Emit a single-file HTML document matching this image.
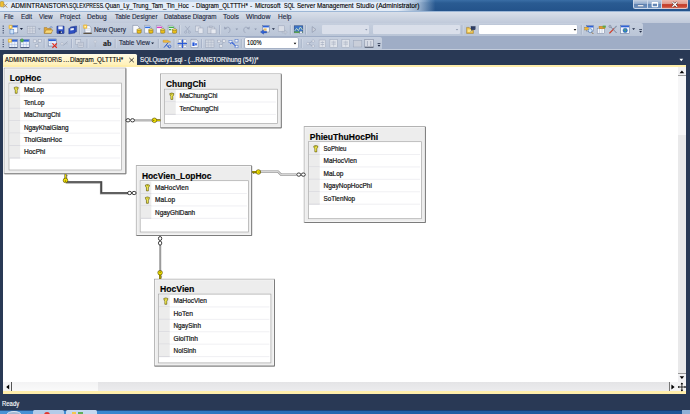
<!DOCTYPE html>
<html><head><meta charset="utf-8"><title>SSMS Diagram</title><style>html,body{margin:0;padding:0}body{width:690px;height:414px;overflow:hidden;position:relative;background:#293955;font-family:"Liberation Sans", sans-serif}
.t{position:absolute;white-space:pre;-webkit-text-stroke:0.12px;line-height:10px;height:10px;z-index:3;transform-origin:0 0}
svg{position:absolute;left:0;top:0}svg text{font-family:"Liberation Sans", sans-serif}</style></head>
<body>
<div style="position:absolute;left:0px;top:0px;width:690px;height:11.5px;background:linear-gradient(#3a6ea6 0,#2a5b92 25%,#23528a 100%);"></div>
<div style="position:absolute;left:-30px;top:0px;width:470px;height:11.5px;background:linear-gradient(to right,rgba(228,237,248,1) 0,rgba(228,237,248,1) 91%,rgba(228,237,248,0.6) 95.5%,rgba(228,237,248,0) 99%);"></div>
<div style="position:absolute;left:-30px;top:0px;width:470px;height:1.5px;background:linear-gradient(to right,rgba(185,208,234,.8) 0,rgba(185,208,234,.8) 90%,rgba(185,208,234,0) 98%);"></div>
<div style="position:absolute;left:0px;top:11px;width:690px;height:1px;background:#9db7d6;"></div>
<div style="position:absolute;left:633px;top:0px;width:15px;height:9.2px;background:linear-gradient(#c4d2e4,#93accd 45%,#5f83b3 52%,#6f92bf);border:0.6px solid #c9d6e8;border-top:none;border-radius:0 0 0 2.5px;box-sizing:border-box;"></div>
<div style="position:absolute;left:648px;top:0px;width:14px;height:9.2px;background:linear-gradient(#c4d2e4,#93accd 45%,#5f83b3 52%,#6f92bf);border:0.6px solid #c9d6e8;border-top:none;border-left:none;box-sizing:border-box;"></div>
<div style="position:absolute;left:662px;top:0px;width:26px;height:9.2px;background:linear-gradient(#edbbb0,#e09c8e 45%,#c74532 52%,#c5402c 75%,#d66a54);border:0.6px solid #e3c4c4;border-top:none;border-left:none;border-radius:0 0 2.5px 0;box-sizing:border-box;"></div>
<div style="position:absolute;left:0px;top:12px;width:690px;height:10.5px;background:linear-gradient(#d9dfe9,#ccd4e1 50%,#c0c9da);"></div>
<div style="position:absolute;left:0px;top:22.5px;width:690px;height:27.5px;background:#9fadc6;"></div>
<div style="position:absolute;left:0px;top:23px;width:642.5px;height:13px;background:linear-gradient(#c6cfde,#bac5d7);border-radius:0 2px 2px 0;"></div>
<div style="position:absolute;left:0px;top:37px;width:382px;height:12.6px;background:linear-gradient(#c6cfde,#bac5d7);border-radius:0 2px 2px 0;"></div>
<div style="position:absolute;left:0px;top:49.3px;width:690px;height:0.7px;background:#c3ccdb;"></div>
<div style="position:absolute;left:0px;top:50px;width:690px;height:364px;background:#293955;"></div>
<div style="position:absolute;left:3.2px;top:53.6px;width:134px;height:12px;background:linear-gradient(#fffbe6,#fff0b4);border-radius:1.5px 1.5px 0 0;"></div>
<div style="position:absolute;left:3.2px;top:65px;width:682.8px;height:2.4px;background:#ffeeab;"></div>
<div style="position:absolute;left:3.2px;top:67.3px;width:682.8px;height:324.2px;background:#fff;"></div>
<div style="position:absolute;left:677.8px;top:67.3px;width:8.2px;height:314.7px;background:#e9e9ea;"></div>
<div style="position:absolute;left:677.8px;top:76px;width:8.2px;height:59px;background:#f6f6f7;"></div>
<div style="position:absolute;left:677.8px;top:67.3px;width:8.2px;height:9px;background:#f1f1f3;border-bottom:0.6px solid #9a9a9a;box-sizing:border-box;"></div>
<div style="position:absolute;left:677.8px;top:373px;width:8.2px;height:9px;background:#f1f1f3;border-top:0.6px solid #9a9a9a;box-sizing:border-box;"></div>
<div style="position:absolute;left:3.2px;top:382.3px;width:674.6px;height:9.2px;background:linear-gradient(#e4e4e6,#ececee);"></div>
<div style="position:absolute;left:12.2px;top:382.3px;width:86px;height:9.2px;background:linear-gradient(#f3f3f4,#fafafa);"></div>
<div style="position:absolute;left:3.2px;top:382.3px;width:8.7px;height:9.2px;background:#f3f3f4;border-right:0.8px solid #555;box-sizing:border-box;"></div>
<div style="position:absolute;left:668.5px;top:382.3px;width:9.3px;height:9.2px;background:#f3f3f4;border-left:0.8px solid #777;box-sizing:border-box;"></div>
<div style="position:absolute;left:677.8px;top:382.3px;width:8.2px;height:9.2px;background:#f4f4f4;"></div>
<div style="position:absolute;left:3.2px;top:391.4px;width:682.8px;height:2.4px;background:#ffeeab;"></div>
<div style="position:absolute;left:0px;top:409.6px;width:690px;height:4.4px;background:linear-gradient(to right,#4a93d6 0,#3a88d0 15%,#2a72bd 35%,#1f5fa6 60%,#1b5496 100%);"></div>
<div style="position:absolute;left:0px;top:409.6px;width:690px;height:0.8px;background:rgba(20,40,80,.55);"></div>
<div style="position:absolute;left:32.5px;top:410.2px;width:31px;height:4px;background:#b4cbe8;border-radius:1.5px 1.5px 0 0;"></div>
<div style="position:absolute;left:65.5px;top:410.2px;width:31.5px;height:4px;background:#c5d8ef;border-radius:1.5px 1.5px 0 0;"></div>
<div style="position:absolute;left:44px;top:411.6px;width:6px;height:3px;background:#e2352b;border-radius:3px 3px 0 0;"></div>
<div style="position:absolute;left:72px;top:411.8px;width:4px;height:3px;background:#f3c64e;"></div>
<div style="position:absolute;left:77.5px;top:411.8px;width:5px;height:3px;background:#5fae5a;"></div>
<div style="position:absolute;left:7px;top:411px;width:14px;height:6px;background:#9fb7d3;border-radius:50%;border:0.6px solid #dfe8f3;box-sizing:border-box;"></div>
<div style="position:absolute;left:682px;top:410.2px;width:8px;height:4px;background:#8fb0d6;"></div>
<div id="ttl0" class="t" style="left:11.2px;top:0.69px;font-size:6.7px;font-weight:normal;color:#000;transform:scaleX(0.9430);">ADMINTRANSTOR</div>
<div id="ttl1" class="t" style="left:66.3px;top:0.69px;font-size:6.7px;font-weight:normal;color:#000;transform:scaleX(1.2908);">\</div>
<div id="ttl2" class="t" style="left:69.0px;top:0.69px;font-size:6.7px;font-weight:normal;color:#000;transform:scaleX(0.7578);">SQLEXPRESS.</div>
<div id="ttl3" class="t" style="left:105.1px;top:0.69px;font-size:6.7px;font-weight:normal;color:#000;transform:scaleX(0.9053);">Quan_Ly_Trung_Tam_Tin_Hoc</div>
<div id="ttl4" class="t" style="left:191.5px;top:0.69px;font-size:6.7px;font-weight:normal;color:#000;transform:scaleX(0.9846);">-</div>
<div id="ttl5" class="t" style="left:196px;top:0.69px;font-size:6.7px;font-weight:normal;color:#000;transform:scaleX(0.9070);">Diagram_QLTTTH*</div>
<div id="ttl6" class="t" style="left:250.4px;top:0.69px;font-size:6.7px;font-weight:normal;color:#000;transform:scaleX(0.9846);">-</div>
<div id="ttl7" class="t" style="left:255.4px;top:0.69px;font-size:6.7px;font-weight:normal;color:#000;transform:scaleX(0.9359);">Microsoft</div>
<div id="ttl8" class="t" style="left:283.5px;top:0.69px;font-size:6.7px;font-weight:normal;color:#000;transform:scaleX(0.8140);">SQL</div>
<div id="ttl9" class="t" style="left:297px;top:0.69px;font-size:6.7px;font-weight:normal;color:#000;transform:scaleX(0.9237);">Server</div>
<div id="ttl10" class="t" style="left:317px;top:0.69px;font-size:6.7px;font-weight:normal;color:#000;transform:scaleX(0.9373);">Management</div>
<div id="ttl11" class="t" style="left:355.8px;top:0.69px;font-size:6.7px;font-weight:normal;color:#000;transform:scaleX(0.9595);">Studio</div>
<div id="ttl12" class="t" style="left:376.4px;top:0.69px;font-size:6.7px;font-weight:normal;color:#000;transform:scaleX(0.9895);">(Administrator)</div>
<div id="m0" class="t" style="left:4px;top:12.19px;font-size:6.7px;font-weight:normal;color:#1b2640;transform:scaleX(0.8904);">File</div>
<div id="m1" class="t" style="left:21px;top:12.19px;font-size:6.7px;font-weight:normal;color:#1b2640;transform:scaleX(0.9539);">Edit</div>
<div id="m2" class="t" style="left:39.3px;top:12.19px;font-size:6.7px;font-weight:normal;color:#1b2640;transform:scaleX(0.9530);">View</div>
<div id="m3" class="t" style="left:60px;top:12.19px;font-size:6.7px;font-weight:normal;color:#1b2640;transform:scaleX(0.9698);">Project</div>
<div id="m4" class="t" style="left:87.4px;top:12.19px;font-size:6.7px;font-weight:normal;color:#1b2640;transform:scaleX(0.9940);">Debug</div>
<div id="m5" class="t" style="left:114.5px;top:12.19px;font-size:6.7px;font-weight:normal;color:#1b2640;transform:scaleX(0.9527);">Table Designer</div>
<div id="m6" class="t" style="left:164px;top:12.19px;font-size:6.7px;font-weight:normal;color:#1b2640;transform:scaleX(0.9432);">Database Diagram</div>
<div id="m7" class="t" style="left:223px;top:12.19px;font-size:6.7px;font-weight:normal;color:#1b2640;transform:scaleX(1.0240);">Tools</div>
<div id="m8" class="t" style="left:246px;top:12.19px;font-size:6.7px;font-weight:normal;color:#1b2640;transform:scaleX(1.0253);">Window</div>
<div id="m9" class="t" style="left:277.5px;top:12.19px;font-size:6.7px;font-weight:normal;color:#1b2640;transform:scaleX(0.9807);">Help</div>
<div id="nq" class="t" style="left:94px;top:24.59px;font-size:6.7px;font-weight:normal;color:#1b2640;transform:scaleX(0.9566);">New Query</div>
<div id="tv" class="t" style="left:119px;top:37.89px;font-size:6.7px;font-weight:normal;color:#1b2640;transform:scaleX(0.9622);">Table View</div>
<div id="zm" class="t" style="left:246.8px;top:37.89px;font-size:6.7px;font-weight:normal;color:#000;transform:scaleX(0.8475);">100%</div>
<div id="ab" class="t" style="left:102.5px;top:38.56px;font-size:8px;font-weight:bold;color:#222;transform:scaleX(1.0055);font-family:'Liberation Serif',serif;">ab</div>
<div id="tab1a" class="t" style="left:5px;top:55.12px;font-size:6.6px;font-weight:normal;color:#000;transform:scaleX(0.8943);">ADMINTRANSTOR\S</div>
<div id="tab1b" class="t" style="left:62.5px;top:55.12px;font-size:6.6px;font-weight:normal;color:#000;transform:scaleX(1.1636);">...</div>
<div id="tab1c" class="t" style="left:69.5px;top:55.12px;font-size:6.6px;font-weight:normal;color:#000;transform:scaleX(0.9465);">Diagram_QLTTTH*</div>
<div id="tab2" class="t" style="left:140px;top:55.12px;font-size:6.6px;font-weight:normal;color:#fff;transform:scaleX(0.9428);">SQLQuery1.sql - (...RANSTOR\hung (54))*</div>
<div id="rdy" class="t" style="left:2px;top:398.79px;font-size:6.7px;font-weight:normal;color:#fff;transform:scaleX(0.8892);">Ready</div>
<div style="position:absolute;left:321.6px;top:25px;width:47.8px;height:9.2px;background:#dadfea;border-radius:1px;"></div>
<div style="position:absolute;left:373.4px;top:25px;width:86.6px;height:9.2px;background:#dadfea;border-radius:1px;"></div>
<div style="position:absolute;left:478.8px;top:25px;width:98.6px;height:9.3px;background:#fff;border-radius:1px;box-shadow:0 0 0 0.5px #b8c2d4;"></div>
<div style="position:absolute;left:245px;top:38.3px;width:53.3px;height:9.7px;background:#fff;border-radius:1px;box-shadow:0 0 0 0.5px #8f9bb3;"></div>
<svg width="690" height="414" viewBox="0 0 690 414">
<rect x="2.6" y="25.6" width="1.3" height="1.1" fill="#414e6c" rx="0" opacity="1"/>
<rect x="2.6" y="27.85" width="1.3" height="1.1" fill="#414e6c" rx="0" opacity="1"/>
<rect x="2.6" y="30.1" width="1.3" height="1.1" fill="#414e6c" rx="0" opacity="1"/>
<rect x="2.6" y="32.35" width="1.3" height="1.1" fill="#414e6c" rx="0" opacity="1"/>
<rect x="10.8" y="25.3" width="7" height="7.6" fill="#f4f7fc" stroke="#5d6f94" stroke-width="0.5" rx="0" opacity="1"/>
<rect x="11.100000000000001" y="25.6" width="6.4" height="1.8" fill="#2f62d6" rx="0" opacity="1"/>
<rect x="8.875" y="25.175" width="3.4499999999999997" height="3.4499999999999997" fill="#f7c948" stroke="#d89b1c" stroke-width="0.3" rx="0.4" opacity="1"/>
<rect x="9.91" y="26.21" width="1.38" height="1.38" fill="#fff6c8" rx="0" opacity="1"/>
<rect x="10" y="29.3" width="3.8" height="4.6" fill="#cfe3f8" stroke="#4a76b8" stroke-width="0.5" rx="0" opacity="1"/>
<path d="M19.799999999999997,28.1 L23.0,28.1 L21.4,30.1 Z" fill="#1b2640" />
<rect x="27.2" y="26.2" width="8" height="7.2" fill="#d3d8e2" stroke="#9aa4b8" stroke-width="0.5" rx="0" opacity="1"/>
<line x1="27.2" y1="28.599999999999998" x2="35.2" y2="28.599999999999998" stroke="#a9b2c4" stroke-width="0.5" opacity="1"/>
<line x1="27.2" y1="31.0" x2="35.2" y2="31.0" stroke="#a9b2c4" stroke-width="0.5" opacity="1"/>
<line x1="29.866666666666667" y1="26.2" x2="29.866666666666667" y2="33.4" stroke="#a9b2c4" stroke-width="0.5" opacity="1"/>
<line x1="32.53333333333333" y1="26.2" x2="32.53333333333333" y2="33.4" stroke="#a9b2c4" stroke-width="0.5" opacity="1"/>
<path d="M37.9,28.200000000000003 L40.699999999999996,28.200000000000003 L39.3,30.0 Z" fill="#8c97ad" />
<path d="M44.2,33.3 L44.2,27.6 L46.8,27.6 L47.6,28.5 L51.2,28.5 L51.2,33.3 Z" fill="#e0a83a" stroke="#94691a" stroke-width="0.45" />
<path d="M44.3,33.3 L46,30 L52.9,30 L51.2,33.3 Z" fill="#f9d978" stroke="#94691a" stroke-width="0.45" />
<path d="M49.5,27.6 q1.6,-1.6 3,-0.2" fill="none" stroke="#3c63b0" stroke-width="0.6" />
<rect x="56.9" y="26.1" width="7.2" height="7.4" fill="#2d50c4" stroke="#1a2d78" stroke-width="0.5" rx="0.5" opacity="1"/>
<rect x="58.3" y="26.3" width="4.4" height="3" fill="#f2f5fb" rx="0" opacity="1"/>
<rect x="58.8" y="31" width="3.4" height="2.5" fill="#16245e" rx="0" opacity="1"/>
<rect x="60.8" y="31.4" width="1" height="1.7" fill="#dfe6f5" rx="0" opacity="1"/>
<path d="M70.4,27 L76.6,26 L76.6,31.8 L70.4,32.8 Z" fill="#3558c8" stroke="#1a2d78" stroke-width="0.45" />
<path d="M68.8,28.4 L75,27.4 L75,33 L68.8,34 Z" fill="#2d50c4" stroke="#1a2d78" stroke-width="0.45" />
<path d="M70.4,28.5 L73.8,27.9 L73.8,30 L70.4,30.6 Z" fill="#eef2fb" />
<line x1="79.7" y1="25" x2="79.7" y2="34.5" stroke="#8e9bb5" stroke-width="0.7" opacity="1"/>
<line x1="80.4" y1="25" x2="80.4" y2="34.5" stroke="#e3e8f0" stroke-width="0.6" opacity="1"/>
<path d="M85,25.6 L89.2,25.6 L91,27.400000000000002 L91,32.800000000000004 L85,32.800000000000004 Z" fill="#f8f9fc" stroke="#6e7c99" stroke-width="0.5" />
<line x1="86.2" y1="28.6" x2="90" y2="28.6" stroke="#b8c2d6" stroke-width="0.5" opacity="1"/>
<line x1="86.2" y1="30.2" x2="90" y2="30.2" stroke="#b8c2d6" stroke-width="0.5" opacity="1"/>
<rect x="83.4" y="24.8" width="3.5999999999999996" height="3.5999999999999996" fill="#f7c948" stroke="#d89b1c" stroke-width="0.3" rx="0.4" opacity="1"/>
<rect x="84.48" y="25.880000000000003" width="1.44" height="1.44" fill="#fff6c8" rx="0" opacity="1"/>
<line x1="83.4" y1="33.3" x2="91.8" y2="33.3" stroke="#4a3a20" stroke-width="1" opacity="1"/>
<path d="M132.8,25.4 L137.4,25.4 L139.20000000000002,27.2 L139.20000000000002,33.199999999999996 L132.8,33.199999999999996 Z" fill="#f8f9fc" stroke="#6e7c99" stroke-width="0.5" />
<rect x="137.0" y="29.400000000000002" width="4.2" height="3.8" fill="#eec21a" stroke="#6b5206" stroke-width="0.45" rx="0.9" opacity="1"/>
<ellipse cx="139.1" cy="29.7" rx="2.1" ry="0.9" fill="#fbe36a" stroke="#6b5206" stroke-width="0.4"/>
<path d="M144.6,25.4 L149.2,25.4 L151.0,27.2 L151.0,33.199999999999996 L144.6,33.199999999999996 Z" fill="#f8f9fc" stroke="#6e7c99" stroke-width="0.5" />
<rect x="145.1" y="26.6" width="5.2" height="1.5" fill="#2f6fe0" rx="0" opacity="1"/>
<rect x="148.79999999999998" y="29.400000000000002" width="4.2" height="3.8" fill="#eec21a" stroke="#6b5206" stroke-width="0.45" rx="0.9" opacity="1"/>
<ellipse cx="150.89999999999998" cy="29.7" rx="2.1" ry="0.9" fill="#fbe36a" stroke="#6b5206" stroke-width="0.4"/>
<path d="M156.4,25.4 L161.0,25.4 L162.8,27.2 L162.8,33.199999999999996 L156.4,33.199999999999996 Z" fill="#f8f9fc" stroke="#6e7c99" stroke-width="0.5" />
<rect x="156.9" y="26.6" width="5.2" height="1.5" fill="#d43fc0" rx="0" opacity="1"/>
<rect x="160.6" y="29.400000000000002" width="4.2" height="3.8" fill="#eec21a" stroke="#6b5206" stroke-width="0.45" rx="0.9" opacity="1"/>
<ellipse cx="162.7" cy="29.7" rx="2.1" ry="0.9" fill="#fbe36a" stroke="#6b5206" stroke-width="0.4"/>
<path d="M168.2,25.4 L172.79999999999998,25.4 L174.6,27.2 L174.6,33.199999999999996 L168.2,33.199999999999996 Z" fill="#f8f9fc" stroke="#6e7c99" stroke-width="0.5" />
<rect x="168.7" y="26.6" width="5.2" height="1.5" fill="#3fae49" rx="0" opacity="1"/>
<rect x="169.0" y="29" width="2" height="1.3" fill="#3fae49" rx="0" opacity="1"/>
<rect x="171.39999999999998" y="29" width="2" height="1.3" fill="#9ad29f" rx="0" opacity="1"/>
<rect x="172.39999999999998" y="29.400000000000002" width="4.2" height="3.8" fill="#eec21a" stroke="#6b5206" stroke-width="0.45" rx="0.9" opacity="1"/>
<ellipse cx="174.49999999999997" cy="29.7" rx="2.1" ry="0.9" fill="#fbe36a" stroke="#6b5206" stroke-width="0.4"/>
<line x1="179.8" y1="25" x2="179.8" y2="34.5" stroke="#8e9bb5" stroke-width="0.7" opacity="1"/>
<line x1="180.5" y1="25" x2="180.5" y2="34.5" stroke="#e3e8f0" stroke-width="0.6" opacity="1"/>
<line x1="185.2" y1="26.2" x2="189.2" y2="31" stroke="#98a2b8" stroke-width="0.7" opacity="1"/>
<line x1="189.8" y1="26.2" x2="185.8" y2="31" stroke="#98a2b8" stroke-width="0.7" opacity="1"/>
<circle cx="185.6" cy="32.2" r="1.1" fill="none" stroke="#98a2b8" stroke-width="0.6"/>
<circle cx="189.4" cy="32.2" r="1.1" fill="none" stroke="#98a2b8" stroke-width="0.6"/>
<rect x="195.4" y="26" width="4.6" height="5.4" fill="#dde1ea" stroke="#9aa4b8" stroke-width="0.5" rx="0" opacity="1"/>
<rect x="198.2" y="28" width="4.8" height="5.6" fill="#e3e6ee" stroke="#9aa4b8" stroke-width="0.5" rx="0" opacity="1"/>
<rect x="207.4" y="27" width="7" height="6.6" fill="#cfd4df" stroke="#9aa4b8" stroke-width="0.5" rx="0" opacity="1"/>
<rect x="209.4" y="26" width="3" height="1.6" fill="#bfc6d4" stroke="#9aa4b8" stroke-width="0.4" rx="0" opacity="1"/>
<rect x="211" y="29" width="5" height="4.8" fill="#e6e9f0" stroke="#9aa4b8" stroke-width="0.5" rx="0" opacity="1"/>
<line x1="219.8" y1="25" x2="219.8" y2="34.5" stroke="#8e9bb5" stroke-width="0.7" opacity="1"/>
<line x1="220.5" y1="25" x2="220.5" y2="34.5" stroke="#e3e8f0" stroke-width="0.6" opacity="1"/>
<path d="M225,28.6 q3.4,-3.2 5,0.4 q0.6,2.4 -1.6,4" fill="none" stroke="#98a2b8" stroke-width="0.8" />
<path d="M224,26.6 L224.4,29.6 L227.2,28.8 Z" fill="#98a2b8" />
<path d="M235.5,28.45 L238.10000000000002,28.45 L236.8,30.150000000000002 Z" fill="#8c97ad" />
<path d="M248.8,28.6 q-3.4,-3.2 -5,0.4 q-0.6,2.4 1.6,4" fill="none" stroke="#98a2b8" stroke-width="0.8" />
<path d="M249.8,26.6 L249.4,29.6 L246.6,28.8 Z" fill="#98a2b8" />
<path d="M254.29999999999998,28.45 L256.9,28.45 L255.6,30.150000000000002 Z" fill="#8c97ad" />
<rect x="262.6" y="25.4" width="6.6" height="6.6" fill="#f4f7fc" stroke="#5d6f94" stroke-width="0.5" rx="0" opacity="1"/>
<rect x="262.9" y="25.7" width="6" height="1.7" fill="#2f62d6" rx="0" opacity="1"/>
<rect x="263.6" y="28.4" width="3" height="2.2" fill="#f0c060" rx="0" opacity="1"/>
<path d="M260.4,32 L263.6,29.8 L263.6,31.2 L266.6,31.2 L266.6,32.9 L263.6,32.9 L263.6,34.2 Z" fill="#2f62d6" stroke="#17347e" stroke-width="0.3" />
<path d="M271.9,28.150000000000002 L274.9,28.150000000000002 L273.4,30.05 Z" fill="#1b2640" />
<rect x="278.2" y="25.8" width="6.2" height="5.6" fill="#d9dde6" stroke="#9aa4b8" stroke-width="0.5" rx="0" opacity="1"/>
<path d="M282,31.4 L285,31.4 L285,30 L287.4,32.2 L285,34.4 L285,33 L282,33 Z" fill="#c2c8d5" stroke="#98a2b8" stroke-width="0.3" />
<line x1="290.4" y1="25" x2="290.4" y2="34.5" stroke="#8e9bb5" stroke-width="0.7" opacity="1"/>
<line x1="291.09999999999997" y1="25" x2="291.09999999999997" y2="34.5" stroke="#e3e8f0" stroke-width="0.6" opacity="1"/>
<rect x="294.2" y="25.8" width="8.6" height="7" fill="#3c74c8" stroke="#27406e" stroke-width="0.5" rx="0" opacity="1"/>
<path d="M294.6,31 L296.6,28.4 L298.4,30.6 L300.4,27 L302.4,30" fill="none" stroke="#d8f0c0" stroke-width="0.8" />
<rect x="294.2" y="31.4" width="8.6" height="1.6" fill="#5aa050" rx="0" opacity="1"/>
<rect x="299.8" y="31.2" width="2.4" height="2.6" fill="#e8ecf4" stroke="#47598a" stroke-width="0.3" rx="0" opacity="1"/>
<line x1="305.7" y1="25" x2="305.7" y2="34.5" stroke="#8e9bb5" stroke-width="0.7" opacity="1"/>
<line x1="306.4" y1="25" x2="306.4" y2="34.5" stroke="#e3e8f0" stroke-width="0.6" opacity="1"/>
<path d="M312.2,26.6 L316,29.5 L312.2,32.4 Z" fill="#c9cfdb" stroke="#8a94aa" stroke-width="0.6" />
<path d="M365.1,29.05 L367.5,29.05 L366.3,30.55 Z" fill="#8c97ad" />
<path d="M455.8,29.05 L458.2,29.05 L457,30.55 Z" fill="#8c97ad" />
<line x1="462.2" y1="25" x2="462.2" y2="34.5" stroke="#8e9bb5" stroke-width="0.7" opacity="1"/>
<line x1="462.9" y1="25" x2="462.9" y2="34.5" stroke="#e3e8f0" stroke-width="0.6" opacity="1"/>
<path d="M466.6,33.4 L466.6,27.4 L469.2,27.4 L470,28.4 L473.4,28.4 L473.4,33.4 Z" fill="#ecc04a" stroke="#8f6a18" stroke-width="0.45" />
<rect x="467.6" y="29.4" width="4.2" height="2.6" fill="#fbe58e" rx="0" opacity="1"/>
<rect x="471" y="26.4" width="4.2" height="3.4" fill="#2c3c66" stroke="#1b2640" stroke-width="0.3" rx="0" opacity="1"/>
<line x1="470.6" y1="31.4" x2="474.6" y2="28.4" stroke="#3b4a70" stroke-width="0.7" opacity="1"/>
<path d="M573.7,28.95 L576.3,28.95 L575,30.650000000000002 Z" fill="#000" />
<line x1="581.4" y1="25" x2="581.4" y2="34.5" stroke="#8e9bb5" stroke-width="0.7" opacity="1"/>
<line x1="582.1" y1="25" x2="582.1" y2="34.5" stroke="#e3e8f0" stroke-width="0.6" opacity="1"/>
<rect x="586.6" y="25.4" width="7" height="5.6" fill="#f4f7fc" stroke="#5d6f94" stroke-width="0.5" rx="0" opacity="1"/>
<rect x="586.9" y="25.7" width="6.4" height="1.8" fill="#2f62d6" rx="0" opacity="1"/>
<rect x="584.8" y="27.2" width="3.6" height="2.8" fill="#f0b83a" stroke="#9a6a12" stroke-width="0.3" rx="0" opacity="1"/>
<circle cx="590.2" cy="30.6" r="2" fill="#cfe6fb" stroke="#3f6db2" stroke-width="0.6"/>
<line x1="591.6" y1="32.2" x2="593.4" y2="34" stroke="#8a6a3a" stroke-width="0.9" opacity="1"/>
<rect x="597.2" y="28.2" width="7.4" height="5.4" fill="#f4f6fa" stroke="#6e7c99" stroke-width="0.5" rx="0" opacity="1"/>
<rect x="599" y="26.2" width="6" height="2.6" fill="#e39a2e" stroke="#9a6a12" stroke-width="0.3" rx="0" opacity="1"/>
<rect x="602.6" y="25.6" width="3.2" height="2" fill="#58a84c" rx="0" opacity="1"/>
<line x1="599.6" y1="29" x2="599.6" y2="33.4" stroke="#9fb0cf" stroke-width="0.5" opacity="1"/>
<line x1="602" y1="29" x2="602" y2="33.4" stroke="#9fb0cf" stroke-width="0.5" opacity="1"/>
<line x1="609.4" y1="33.4" x2="614.2" y2="28.4" stroke="#d03a24" stroke-width="1.3" opacity="1"/>
<line x1="614" y1="28.6" x2="616.6" y2="26" stroke="#8b95aa" stroke-width="1.1" opacity="1"/>
<line x1="610.2" y1="26.4" x2="616.6" y2="33" stroke="#7d879c" stroke-width="1.0" opacity="1"/>
<circle cx="610" cy="26.4" r="1.2" fill="#aab3c4" stroke="#6f7990" stroke-width="0.4"/>
<rect x="620.6" y="25.2" width="8.8" height="8.2" fill="#f4f7fc" stroke="#5d6f94" stroke-width="0.5" rx="0" opacity="1"/>
<rect x="620.9" y="25.5" width="8.200000000000001" height="1.8" fill="#2f62d6" rx="0" opacity="1"/>
<circle cx="625.2" cy="30.4" r="2.2" fill="#2e7bd0" stroke="#1d4c8a" stroke-width="0.4"/>
<path d="M624,29.6 q1.2,-1 2,0.2 q0.2,1.4 -1,1.6 z" fill="#58b04e" />
<path d="M632.1,28.150000000000002 L635.1,28.150000000000002 L633.6,30.05 Z" fill="#1b2640" />
<line x1="639.2" y1="29.6" x2="642" y2="29.6" stroke="#1b2640" stroke-width="0.8" opacity="1"/>
<path d="M639.2,30.900000000000002 L642.0,30.900000000000002 L640.6,32.7 Z" fill="#1b2640" />
<rect x="2.6" y="39.4" width="1.3" height="1.1" fill="#414e6c" rx="0" opacity="1"/>
<rect x="2.6" y="41.65" width="1.3" height="1.1" fill="#414e6c" rx="0" opacity="1"/>
<rect x="2.6" y="43.9" width="1.3" height="1.1" fill="#414e6c" rx="0" opacity="1"/>
<rect x="2.6" y="46.15" width="1.3" height="1.1" fill="#414e6c" rx="0" opacity="1"/>
<rect x="9" y="39.4" width="8.6" height="8.2" fill="#eef3fb" stroke="#51648c" stroke-width="0.5" rx="0" opacity="1"/>
<rect x="9.3" y="39.699999999999996" width="8.0" height="2.0" fill="#2f62d6" rx="0" opacity="1"/>
<line x1="11.866666666666667" y1="41.6" x2="11.866666666666667" y2="47.599999999999994" stroke="#9fb4dc" stroke-width="0.5" opacity="1"/>
<line x1="14.733333333333334" y1="41.6" x2="14.733333333333334" y2="47.599999999999994" stroke="#9fb4dc" stroke-width="0.5" opacity="1"/>
<line x1="9" y1="44.6" x2="17.6" y2="44.6" stroke="#9fb4dc" stroke-width="0.5" opacity="1"/>
<line x1="9" y1="47.599999999999994" x2="17.6" y2="47.599999999999994" stroke="#33456b" stroke-width="0.8" opacity="1"/>
<rect x="8.275" y="38.875" width="3.4499999999999997" height="3.4499999999999997" fill="#f7c948" stroke="#d89b1c" stroke-width="0.3" rx="0.4" opacity="1"/>
<rect x="9.31" y="39.910000000000004" width="1.38" height="1.38" fill="#fff6c8" rx="0" opacity="1"/>
<rect x="20.6" y="39.4" width="8.6" height="8.2" fill="#eef3fb" stroke="#51648c" stroke-width="0.5" rx="0" opacity="1"/>
<rect x="20.900000000000002" y="39.699999999999996" width="8.0" height="2.0" fill="#2f62d6" rx="0" opacity="1"/>
<line x1="23.46666666666667" y1="41.6" x2="23.46666666666667" y2="47.599999999999994" stroke="#9fb4dc" stroke-width="0.5" opacity="1"/>
<line x1="26.333333333333336" y1="41.6" x2="26.333333333333336" y2="47.599999999999994" stroke="#9fb4dc" stroke-width="0.5" opacity="1"/>
<line x1="20.6" y1="44.6" x2="29.200000000000003" y2="44.6" stroke="#9fb4dc" stroke-width="0.5" opacity="1"/>
<line x1="20.6" y1="47.599999999999994" x2="29.200000000000003" y2="47.599999999999994" stroke="#33456b" stroke-width="0.8" opacity="1"/>
<path d="M22,38.4 L24,40.4 L22,42.4 L20,40.4 Z" fill="#4fae48" stroke="#2c7a2a" stroke-width="0.3" />
<rect x="33.2" y="39.9" width="3" height="2.6" fill="#e3e6ed" stroke="#9aa4b8" stroke-width="0.5" rx="0" opacity="1"/>
<rect x="38.2" y="39.6" width="3" height="2.6" fill="#e3e6ed" stroke="#9aa4b8" stroke-width="0.5" rx="0" opacity="1"/>
<rect x="35.2" y="44.4" width="3" height="2.6" fill="#e3e6ed" stroke="#9aa4b8" stroke-width="0.5" rx="0" opacity="1"/>
<line x1="36.2" y1="41.199999999999996" x2="38.2" y2="40.9" stroke="#9aa4b8" stroke-width="0.5" opacity="1"/>
<line x1="36.7" y1="44.4" x2="39.5" y2="42.199999999999996" stroke="#9aa4b8" stroke-width="0.5" opacity="1"/>
<line x1="44.3" y1="39" x2="44.3" y2="48" stroke="#8e9bb5" stroke-width="0.7" opacity="1"/>
<line x1="45.0" y1="39" x2="45.0" y2="48" stroke="#e3e8f0" stroke-width="0.6" opacity="1"/>
<rect x="48.2" y="39.0" width="8" height="7" fill="#f1f5fc" stroke="#51648c" stroke-width="0.5" rx="0" opacity="1"/>
<rect x="48.5" y="39.3" width="7.4" height="1.8" fill="#2f62d6" rx="0" opacity="1"/>
<line x1="51" y1="41.199999999999996" x2="51" y2="46.0" stroke="#9fb4dc" stroke-width="0.5" opacity="1"/>
<line x1="48.2" y1="43.4" x2="56.2" y2="43.4" stroke="#9fb4dc" stroke-width="0.5" opacity="1"/>
<line x1="52.4" y1="43.4" x2="56.8" y2="47.8" stroke="#e02818" stroke-width="1.2" opacity="1"/>
<line x1="56.8" y1="43.4" x2="52.4" y2="47.8" stroke="#e02818" stroke-width="1.2" opacity="1"/>
<circle cx="62" cy="43.8" r="1.3" fill="#dfe3ea" stroke="#9aa4b8" stroke-width="0.5"/>
<line x1="63.4" y1="45.4" x2="67.6" y2="41.6" stroke="#9aa4b8" stroke-width="0.8" opacity="1"/>
<line x1="64.8" y1="43.8" x2="68" y2="43.8" stroke="#a9b2c4" stroke-width="0.5" opacity="1"/>
<line x1="71.6" y1="39" x2="71.6" y2="48" stroke="#8e9bb5" stroke-width="0.7" opacity="1"/>
<line x1="72.3" y1="39" x2="72.3" y2="48" stroke="#e3e8f0" stroke-width="0.6" opacity="1"/>
<rect x="75.4" y="39.6" width="5.4" height="5" fill="#d6dbe5" stroke="#9aa4b8" stroke-width="0.5" rx="0" opacity="1"/>
<rect x="78" y="42.2" width="5.6" height="5.4" fill="#cfd4df" stroke="#9aa4b8" stroke-width="0.5" rx="0" opacity="1"/>
<line x1="79" y1="44" x2="82.6" y2="44" stroke="#9aa4b8" stroke-width="0.5" opacity="1"/>
<line x1="79" y1="45.6" x2="82.6" y2="45.6" stroke="#9aa4b8" stroke-width="0.5" opacity="1"/>
<line x1="87.2" y1="39" x2="87.2" y2="48" stroke="#8e9bb5" stroke-width="0.7" opacity="1"/>
<line x1="87.9" y1="39" x2="87.9" y2="48" stroke="#e3e8f0" stroke-width="0.6" opacity="1"/>
<circle cx="95.2" cy="41.6" r="1.4" fill="#d2d7e1" stroke="#aeb6c6" stroke-width="0.4"/>
<line x1="95.2" y1="43" x2="95.2" y2="47" stroke="#b4bccb" stroke-width="0.9" opacity="1"/>
<line x1="115.3" y1="39" x2="115.3" y2="48" stroke="#8e9bb5" stroke-width="0.7" opacity="1"/>
<line x1="116.0" y1="39" x2="116.0" y2="48" stroke="#e3e8f0" stroke-width="0.6" opacity="1"/>
<path d="M151.1,42.449999999999996 L154.1,42.449999999999996 L152.6,44.35 Z" fill="#1b2640" />
<line x1="158.4" y1="39" x2="158.4" y2="48" stroke="#8e9bb5" stroke-width="0.7" opacity="1"/>
<line x1="159.1" y1="39" x2="159.1" y2="48" stroke="#e3e8f0" stroke-width="0.6" opacity="1"/>
<path d="M163,40.2 L167.4,40.2 L170.8,42 L167.4,42.6 L163,42.2 Z" fill="#f0b83a" stroke="#a87414" stroke-width="0.3" />
<path d="M164,47.6 L168,42.8 M166.4,45 L169.4,47.8" fill="none" stroke="#2858c8" stroke-width="1" />
<circle cx="169.6" cy="46.4" r="1.3" fill="none" stroke="#2858c8" stroke-width="0.7"/>
<line x1="174.2" y1="39" x2="174.2" y2="48" stroke="#8e9bb5" stroke-width="0.7" opacity="1"/>
<line x1="174.89999999999998" y1="39" x2="174.89999999999998" y2="48" stroke="#e3e8f0" stroke-width="0.6" opacity="1"/>
<line x1="177.6" y1="43.6" x2="187" y2="43.6" stroke="#2456d8" stroke-width="1.1" opacity="1"/>
<line x1="182.4" y1="39.4" x2="182.4" y2="48" stroke="#2456d8" stroke-width="1.1" opacity="1"/>
<rect x="183.6" y="39.8" width="3" height="2.4" fill="#f4f6fb" stroke="#8592ad" stroke-width="0.4" rx="0" opacity="1"/>
<rect x="183.6" y="45.2" width="3" height="2.4" fill="#f4f6fb" stroke="#8592ad" stroke-width="0.4" rx="0" opacity="1"/>
<rect x="178.2" y="39.8" width="3" height="2.4" fill="#f4f6fb" stroke="#8592ad" stroke-width="0.4" rx="0" opacity="1"/>
<rect x="178.2" y="45.2" width="3" height="2.4" fill="#f4f6fb" stroke="#8592ad" stroke-width="0.4" rx="0" opacity="1"/>
<path d="M191,39.4 L196.2,39.4 L198,41.199999999999996 L198,47.599999999999994 L191,47.599999999999994 Z" fill="#f8f9fc" stroke="#6e7c99" stroke-width="0.5" />
<rect x="192.4" y="42.4" width="2.2" height="3.6" fill="#2456d8" rx="0" opacity="1"/>
<rect x="195.2" y="43.2" width="1.6" height="2.2" fill="#2456d8" rx="0" opacity="1"/>
<line x1="192.2" y1="41" x2="196.6" y2="41" stroke="#7d8cb0" stroke-width="0.5" opacity="1"/>
<line x1="201.6" y1="39" x2="201.6" y2="48" stroke="#8e9bb5" stroke-width="0.7" opacity="1"/>
<line x1="202.29999999999998" y1="39" x2="202.29999999999998" y2="48" stroke="#e3e8f0" stroke-width="0.6" opacity="1"/>
<rect x="205.4" y="40" width="8.6" height="7.4" fill="#d3d8e2" stroke="#9aa4b8" stroke-width="0.5" rx="0" opacity="1"/>
<line x1="205.4" y1="42.46666666666667" x2="214.0" y2="42.46666666666667" stroke="#a9b2c4" stroke-width="0.5" opacity="1"/>
<line x1="205.4" y1="44.93333333333334" x2="214.0" y2="44.93333333333334" stroke="#a9b2c4" stroke-width="0.5" opacity="1"/>
<line x1="208.26666666666668" y1="40" x2="208.26666666666668" y2="47.4" stroke="#a9b2c4" stroke-width="0.5" opacity="1"/>
<line x1="211.13333333333333" y1="40" x2="211.13333333333333" y2="47.4" stroke="#a9b2c4" stroke-width="0.5" opacity="1"/>
<rect x="217.6" y="40.1" width="3" height="2.6" fill="#e3e6ed" stroke="#9aa4b8" stroke-width="0.5" rx="0" opacity="1"/>
<rect x="222.6" y="39.800000000000004" width="3" height="2.6" fill="#e3e6ed" stroke="#9aa4b8" stroke-width="0.5" rx="0" opacity="1"/>
<rect x="219.6" y="44.6" width="3" height="2.6" fill="#e3e6ed" stroke="#9aa4b8" stroke-width="0.5" rx="0" opacity="1"/>
<line x1="220.6" y1="41.4" x2="222.6" y2="41.1" stroke="#9aa4b8" stroke-width="0.5" opacity="1"/>
<line x1="221.1" y1="44.6" x2="223.9" y2="42.4" stroke="#9aa4b8" stroke-width="0.5" opacity="1"/>
<rect x="235" y="39.6" width="3" height="2.4" fill="#f4f6fb" stroke="#4a72c8" stroke-width="0.5" rx="0" opacity="1"/>
<rect x="235" y="45.4" width="3" height="2.4" fill="#f4f6fb" stroke="#4a72c8" stroke-width="0.5" rx="0" opacity="1"/>
<rect x="229" y="40.4" width="3" height="2.4" fill="#f4f6fb" stroke="#4a72c8" stroke-width="0.5" rx="0" opacity="1"/>
<path d="M230,44 q3,-3 4.6,0.6 M232,43 L236,46.4" fill="none" stroke="#2456d8" stroke-width="0.8" />
<line x1="241.4" y1="39" x2="241.4" y2="48" stroke="#8e9bb5" stroke-width="0.7" opacity="1"/>
<line x1="242.1" y1="39" x2="242.1" y2="48" stroke="#e3e8f0" stroke-width="0.6" opacity="1"/>
<path d="M293.7,42.75 L296.3,42.75 L295,44.45 Z" fill="#000" />
<line x1="301.4" y1="39" x2="301.4" y2="48" stroke="#8e9bb5" stroke-width="0.7" opacity="1"/>
<line x1="302.09999999999997" y1="39" x2="302.09999999999997" y2="48" stroke="#e3e8f0" stroke-width="0.6" opacity="1"/>
<circle cx="307.9" cy="43.6" r="1.3" fill="#e3e6ed" stroke="#96a0b6" stroke-width="0.5"/>
<circle cx="313.2" cy="41.1" r="1.3" fill="#e3e6ed" stroke="#96a0b6" stroke-width="0.5"/>
<circle cx="313.2" cy="46.1" r="1.3" fill="#e3e6ed" stroke="#96a0b6" stroke-width="0.5"/>
<line x1="309.0" y1="43.1" x2="312.0" y2="41.6" stroke="#96a0b6" stroke-width="0.6" opacity="1"/>
<line x1="309.0" y1="44.1" x2="312.0" y2="45.6" stroke="#96a0b6" stroke-width="0.6" opacity="1"/>
<rect x="319.1" y="40" width="6.6" height="7.6" fill="#dfe3ea" stroke="#9aa4b8" stroke-width="0.5" rx="0" opacity="1"/>
<line x1="320.6" y1="42.5" x2="324.20000000000005" y2="42.5" stroke="#9aa4b8" stroke-width="0.6" opacity="1"/>
<line x1="320.6" y1="44.5" x2="324.20000000000005" y2="44.5" stroke="#9aa4b8" stroke-width="0.6" opacity="1"/>
<line x1="322.40000000000003" y1="41" x2="322.40000000000003" y2="46.6" stroke="#aab3c4" stroke-width="0.5" opacity="1"/>
<rect x="329.9" y="39.6" width="7.4" height="8" fill="#dfe3ea" stroke="#9aa4b8" stroke-width="0.5" rx="0" opacity="1"/>
<line x1="331.4" y1="42.1" x2="335.79999999999995" y2="42.1" stroke="#9aa4b8" stroke-width="0.6" opacity="1"/>
<line x1="331.4" y1="44.1" x2="335.79999999999995" y2="44.1" stroke="#9aa4b8" stroke-width="0.6" opacity="1"/>
<line x1="333.59999999999997" y1="40.6" x2="333.59999999999997" y2="46.6" stroke="#aab3c4" stroke-width="0.5" opacity="1"/>
<rect x="341.9" y="39.6" width="7.6" height="8" fill="#dfe3ea" stroke="#9aa4b8" stroke-width="0.5" rx="0" opacity="1"/>
<line x1="343.4" y1="42.1" x2="348.0" y2="42.1" stroke="#9aa4b8" stroke-width="0.6" opacity="1"/>
<line x1="343.4" y1="44.1" x2="348.0" y2="44.1" stroke="#9aa4b8" stroke-width="0.6" opacity="1"/>
<line x1="345.7" y1="40.6" x2="345.7" y2="46.6" stroke="#aab3c4" stroke-width="0.5" opacity="1"/>
<rect x="353.6" y="40.6" width="8.2" height="6.4" fill="#c9ced9" stroke="#9aa4b8" stroke-width="0.5" rx="0" opacity="1"/>
<rect x="364.8" y="39.6" width="8.6" height="8" fill="#d9dde6" stroke="#7a8499" stroke-width="0.5" rx="0" opacity="1"/>
<line x1="364.8" y1="47.2" x2="373.4" y2="47.2" stroke="#4a5468" stroke-width="1" opacity="1"/>
<line x1="367.4" y1="41" x2="367.4" y2="46" stroke="#8a94aa" stroke-width="0.6" opacity="1"/>
<line x1="370.8" y1="41" x2="370.8" y2="46" stroke="#8a94aa" stroke-width="0.6" opacity="1"/>
<line x1="377.6" y1="43.6" x2="380.4" y2="43.6" stroke="#1b2640" stroke-width="0.8" opacity="1"/>
<path d="M377.6,44.9 L380.4,44.9 L379,46.699999999999996 Z" fill="#1b2640" />
<rect x="0.2" y="1.6" width="3.6" height="5.2" fill="#f0c030" stroke="#8a6a10" stroke-width="0.4" rx="1" opacity="1"/>
<line x1="3.4" y1="7.6" x2="7.2" y2="3.6" stroke="#8a93a8" stroke-width="1" opacity="1"/>
<line x1="3.4" y1="3.6" x2="7.2" y2="7.6" stroke="#c08a3a" stroke-width="1" opacity="1"/>
<rect x="637.6" y="5" width="6" height="1.6" fill="#ffffff" stroke="#3a4f74" stroke-width="0.3" rx="0.5" opacity="1"/>
<rect x="652.2" y="2.6" width="5.4" height="4.2" fill="none" stroke="#ffffff" stroke-width="1.1" rx="0.6" opacity="1"/>
<rect x="652.2" y="2.2" width="5.4" height="1.2" fill="#ffffff" rx="0" opacity="1"/>
<path d="M672.4,2.2 L677.2,6.8 M677.2,2.2 L672.4,6.8" fill="none" stroke="#3b1b16" stroke-width="2.2" />
<path d="M672.4,2.2 L677.2,6.8 M677.2,2.2 L672.4,6.8" fill="none" stroke="#ffffff" stroke-width="1.3" />
<path d="M129.4,58 L133.8,62.2 M133.8,58 L129.4,62.2" fill="none" stroke="#2a2a2a" stroke-width="0.9" />
<path d="M679.4,58.85 L683.1999999999999,58.85 L681.3,61.35 Z" fill="#ffffff" />
<path d="M679.6,73.2 L684.2,73.2 L681.9,70.4 Z" fill="#000" />
<path d="M679.6,376.2 L684.2,376.2 L681.9,379 Z" fill="#000" />
<path d="M9.2,384.4 L9.2,389.4 L6.2,386.9 Z" fill="#000" />
<path d="M671.4,384.4 L671.4,389.4 L674.6,386.9 Z" fill="#000" />
<path d="M681.9,383 L681.9,391 M678.2,387 L685.8,387" fill="none" stroke="#000" stroke-width="0.8" />
<path d="M680.6,384.2 L681.9,382.6 L683.2,384.2 Z M680.6,389.8 L681.9,391.4 L683.2,389.8 Z M679.2,385.8 L677.8,387 L679.2,388.2 Z M684.6,385.8 L686,387 L684.6,388.2 Z" fill="#000" />
<rect x="4.2" y="68.1" width="121.6" height="105.6" fill="#ededed" stroke="#a2a2a2" stroke-width="0.8" rx="0" opacity="1"/>
<rect x="5.0" y="68.89999999999999" width="120.0" height="104.0" fill="none" stroke="#f8f8f8" stroke-width="0.6" rx="0" opacity="1"/>
<path d="M125.89999999999999,68.5 L125.89999999999999,173.79999999999998 L4.6000000000000005,173.79999999999998" fill="none" stroke="#7c7c7c" stroke-width="1.0" />
<rect x="9" y="83.1" width="112.6" height="86.9" fill="#ffffff" stroke="#a9a9a9" stroke-width="0.7" rx="0" opacity="1"/>
<rect x="9.5" y="83.8" width="10.6" height="11.92" fill="#ececec" rx="0" opacity="1"/>
<line x1="9.4" y1="95.92" x2="120.1" y2="95.92" stroke="#e9e9ee" stroke-width="0.7" opacity="1"/>
<line x1="9.4" y1="95.92" x2="20.1" y2="95.92" stroke="#cfcfd4" stroke-width="0.7" opacity="1"/>
<text x="23.9" y="92.25" font-size="6.6" font-weight="normal" fill="#1a1a1a" stroke="#1a1a1a" stroke-width="0.22" textLength="20.0" lengthAdjust="spacingAndGlyphs">MaLop</text>
<path d="M14.149999999999999,87.5 Q16.2,86.3 18.25,87.5 L17.9,89.1 L17.15,90.1 L17.15,93.3 L15.25,93.3 L15.25,90.1 L14.5,89.1 Z" fill="#e4da22" stroke="#474100" stroke-width="0.55" stroke-linejoin="round"/>
<path d="M15.2,87.8 L17.2,87.8 L16.5,89.4 L16.5,92.6 L15.899999999999999,92.6 L15.899999999999999,89.4 Z" fill="#f3ee7a" />
<circle cx="16.2" cy="88.1" r="0.45" fill="#474100"/>
<rect x="9.5" y="96.22" width="10.6" height="11.92" fill="#ececec" rx="0" opacity="1"/>
<line x1="9.4" y1="108.34" x2="120.1" y2="108.34" stroke="#e9e9ee" stroke-width="0.7" opacity="1"/>
<line x1="9.4" y1="108.34" x2="20.1" y2="108.34" stroke="#cfcfd4" stroke-width="0.7" opacity="1"/>
<text x="23.9" y="104.67" font-size="6.6" font-weight="normal" fill="#1a1a1a" stroke="#1a1a1a" stroke-width="0.22" textLength="20.6" lengthAdjust="spacingAndGlyphs">TenLop</text>
<rect x="9.5" y="108.64" width="10.6" height="11.92" fill="#ececec" rx="0" opacity="1"/>
<line x1="9.4" y1="120.76" x2="120.1" y2="120.76" stroke="#e9e9ee" stroke-width="0.7" opacity="1"/>
<line x1="9.4" y1="120.76" x2="20.1" y2="120.76" stroke="#cfcfd4" stroke-width="0.7" opacity="1"/>
<text x="23.9" y="117.09" font-size="6.6" font-weight="normal" fill="#1a1a1a" stroke="#1a1a1a" stroke-width="0.22" textLength="36.4" lengthAdjust="spacingAndGlyphs">MaChungChi</text>
<rect x="9.5" y="121.05999999999999" width="10.6" height="11.92" fill="#ececec" rx="0" opacity="1"/>
<line x1="9.4" y1="133.17999999999998" x2="120.1" y2="133.17999999999998" stroke="#e9e9ee" stroke-width="0.7" opacity="1"/>
<line x1="9.4" y1="133.17999999999998" x2="20.1" y2="133.17999999999998" stroke="#cfcfd4" stroke-width="0.7" opacity="1"/>
<text x="23.9" y="129.51" font-size="6.6" font-weight="normal" fill="#1a1a1a" stroke="#1a1a1a" stroke-width="0.22" textLength="44.6" lengthAdjust="spacingAndGlyphs">NgayKhaiGiang</text>
<rect x="9.5" y="133.48000000000002" width="10.6" height="11.92" fill="#ececec" rx="0" opacity="1"/>
<line x1="9.4" y1="145.6" x2="120.1" y2="145.6" stroke="#e9e9ee" stroke-width="0.7" opacity="1"/>
<line x1="9.4" y1="145.6" x2="20.1" y2="145.6" stroke="#cfcfd4" stroke-width="0.7" opacity="1"/>
<text x="23.9" y="141.93" font-size="6.6" font-weight="normal" fill="#1a1a1a" stroke="#1a1a1a" stroke-width="0.22" textLength="38.0" lengthAdjust="spacingAndGlyphs">ThoiGianHoc</text>
<rect x="9.5" y="145.9" width="10.6" height="11.92" fill="#ececec" rx="0" opacity="1"/>
<line x1="9.4" y1="158.01999999999998" x2="120.1" y2="158.01999999999998" stroke="#e9e9ee" stroke-width="0.7" opacity="1"/>
<line x1="9.4" y1="158.01999999999998" x2="20.1" y2="158.01999999999998" stroke="#cfcfd4" stroke-width="0.7" opacity="1"/>
<text x="23.9" y="154.35" font-size="6.6" font-weight="normal" fill="#1a1a1a" stroke="#1a1a1a" stroke-width="0.22" textLength="21.4" lengthAdjust="spacingAndGlyphs">HocPhi</text>
<text x="9.8" y="81.3" font-size="8.6" font-weight="bold" fill="#000" stroke="#000" stroke-width="0.15" textLength="31.4" lengthAdjust="spacingAndGlyphs">LopHoc</text>
<rect x="160.5" y="73.9" width="120.69999999999999" height="53.89999999999999" fill="#ededed" stroke="#a2a2a2" stroke-width="0.8" rx="0" opacity="1"/>
<rect x="161.3" y="74.7" width="119.1" height="52.29999999999999" fill="none" stroke="#f8f8f8" stroke-width="0.6" rx="0" opacity="1"/>
<path d="M281.3,74.30000000000001 L281.3,127.89999999999999 L160.9,127.89999999999999" fill="none" stroke="#7c7c7c" stroke-width="1.0" />
<rect x="164.6" y="89.2" width="112.79999999999998" height="34.39999999999999" fill="#ffffff" stroke="#a9a9a9" stroke-width="0.7" rx="0" opacity="1"/>
<rect x="165.1" y="89.9" width="10.6" height="11.92" fill="#ececec" rx="0" opacity="1"/>
<line x1="165.0" y1="102.02000000000001" x2="275.9" y2="102.02000000000001" stroke="#e9e9ee" stroke-width="0.7" opacity="1"/>
<line x1="165.0" y1="102.02000000000001" x2="175.7" y2="102.02000000000001" stroke="#cfcfd4" stroke-width="0.7" opacity="1"/>
<text x="179.5" y="98.35" font-size="6.6" font-weight="normal" fill="#1a1a1a" stroke="#1a1a1a" stroke-width="0.22" textLength="38.0" lengthAdjust="spacingAndGlyphs">MaChungChi</text>
<path d="M169.74999999999997,93.60000000000001 Q171.79999999999998,92.4 173.85,93.60000000000001 L173.49999999999997,95.2 L172.74999999999997,96.2 L172.74999999999997,99.4 L170.85,99.4 L170.85,96.2 L170.1,95.2 Z" fill="#e4da22" stroke="#474100" stroke-width="0.55" stroke-linejoin="round"/>
<path d="M170.79999999999998,93.9 L172.79999999999998,93.9 L172.1,95.50000000000001 L172.1,98.7 L171.49999999999997,98.7 L171.49999999999997,95.50000000000001 Z" fill="#f3ee7a" />
<circle cx="171.79999999999998" cy="94.2" r="0.45" fill="#474100"/>
<rect x="165.1" y="102.32000000000001" width="10.6" height="11.92" fill="#ececec" rx="0" opacity="1"/>
<line x1="165.0" y1="114.44000000000001" x2="275.9" y2="114.44000000000001" stroke="#e9e9ee" stroke-width="0.7" opacity="1"/>
<line x1="165.0" y1="114.44000000000001" x2="175.7" y2="114.44000000000001" stroke="#cfcfd4" stroke-width="0.7" opacity="1"/>
<text x="179.5" y="110.77" font-size="6.6" font-weight="normal" fill="#1a1a1a" stroke="#1a1a1a" stroke-width="0.22" textLength="39.0" lengthAdjust="spacingAndGlyphs">TenChungChi</text>
<text x="166.1" y="87.1" font-size="8.6" font-weight="bold" fill="#000" stroke="#000" stroke-width="0.15" textLength="39.7" lengthAdjust="spacingAndGlyphs">ChungChi</text>
<rect x="304.2" y="126.6" width="121.10000000000002" height="95.80000000000001" fill="#ededed" stroke="#a2a2a2" stroke-width="0.8" rx="0" opacity="1"/>
<rect x="305.0" y="127.39999999999999" width="119.50000000000003" height="94.20000000000002" fill="none" stroke="#f8f8f8" stroke-width="0.6" rx="0" opacity="1"/>
<path d="M425.40000000000003,127.0 L425.40000000000003,222.5 L304.59999999999997,222.5" fill="none" stroke="#7c7c7c" stroke-width="1.0" />
<rect x="308.6" y="141.7" width="112.89999999999998" height="77.0" fill="#ffffff" stroke="#a9a9a9" stroke-width="0.7" rx="0" opacity="1"/>
<rect x="309.1" y="142.4" width="10.6" height="11.92" fill="#ececec" rx="0" opacity="1"/>
<line x1="309.0" y1="154.51999999999998" x2="420.0" y2="154.51999999999998" stroke="#e9e9ee" stroke-width="0.7" opacity="1"/>
<line x1="309.0" y1="154.51999999999998" x2="319.70000000000005" y2="154.51999999999998" stroke="#cfcfd4" stroke-width="0.7" opacity="1"/>
<text x="323.5" y="150.85" font-size="6.6" font-weight="normal" fill="#1a1a1a" stroke="#1a1a1a" stroke-width="0.22" textLength="23.0" lengthAdjust="spacingAndGlyphs">SoPhieu</text>
<path d="M313.75,146.1 Q315.8,144.9 317.85,146.1 L317.5,147.7 L316.75,148.7 L316.75,151.9 L314.85,151.9 L314.85,148.7 L314.1,147.7 Z" fill="#e4da22" stroke="#474100" stroke-width="0.55" stroke-linejoin="round"/>
<path d="M314.8,146.4 L316.8,146.4 L316.1,148.0 L316.1,151.2 L315.5,151.2 L315.5,148.0 Z" fill="#f3ee7a" />
<circle cx="315.8" cy="146.7" r="0.45" fill="#474100"/>
<rect x="309.1" y="154.82" width="10.6" height="11.92" fill="#ececec" rx="0" opacity="1"/>
<line x1="309.0" y1="166.93999999999997" x2="420.0" y2="166.93999999999997" stroke="#e9e9ee" stroke-width="0.7" opacity="1"/>
<line x1="309.0" y1="166.93999999999997" x2="319.70000000000005" y2="166.93999999999997" stroke="#cfcfd4" stroke-width="0.7" opacity="1"/>
<text x="323.5" y="163.27" font-size="6.6" font-weight="normal" fill="#1a1a1a" stroke="#1a1a1a" stroke-width="0.22" textLength="33.4" lengthAdjust="spacingAndGlyphs">MaHocVien</text>
<rect x="309.1" y="167.24" width="10.6" height="11.92" fill="#ececec" rx="0" opacity="1"/>
<line x1="309.0" y1="179.35999999999999" x2="420.0" y2="179.35999999999999" stroke="#e9e9ee" stroke-width="0.7" opacity="1"/>
<line x1="309.0" y1="179.35999999999999" x2="319.70000000000005" y2="179.35999999999999" stroke="#cfcfd4" stroke-width="0.7" opacity="1"/>
<text x="323.5" y="175.69" font-size="6.6" font-weight="normal" fill="#1a1a1a" stroke="#1a1a1a" stroke-width="0.22" textLength="20.0" lengthAdjust="spacingAndGlyphs">MaLop</text>
<rect x="309.1" y="179.66" width="10.6" height="11.92" fill="#ececec" rx="0" opacity="1"/>
<line x1="309.0" y1="191.77999999999997" x2="420.0" y2="191.77999999999997" stroke="#e9e9ee" stroke-width="0.7" opacity="1"/>
<line x1="309.0" y1="191.77999999999997" x2="319.70000000000005" y2="191.77999999999997" stroke="#cfcfd4" stroke-width="0.7" opacity="1"/>
<text x="323.5" y="188.11" font-size="6.6" font-weight="normal" fill="#1a1a1a" stroke="#1a1a1a" stroke-width="0.22" textLength="48.4" lengthAdjust="spacingAndGlyphs">NgayNopHocPhi</text>
<rect x="309.1" y="192.08" width="10.6" height="11.92" fill="#ececec" rx="0" opacity="1"/>
<line x1="309.0" y1="204.2" x2="420.0" y2="204.2" stroke="#e9e9ee" stroke-width="0.7" opacity="1"/>
<line x1="309.0" y1="204.2" x2="319.70000000000005" y2="204.2" stroke="#cfcfd4" stroke-width="0.7" opacity="1"/>
<text x="323.5" y="200.53" font-size="6.6" font-weight="normal" fill="#1a1a1a" stroke="#1a1a1a" stroke-width="0.22" textLength="31.6" lengthAdjust="spacingAndGlyphs">SoTienNop</text>
<text x="309.8" y="139.8" font-size="8.6" font-weight="bold" fill="#000" stroke="#000" stroke-width="0.15" textLength="68.4" lengthAdjust="spacingAndGlyphs">PhieuThuHocPhi</text>
<rect x="136.3" y="165.6" width="115.29999999999998" height="69.80000000000001" fill="#ededed" stroke="#a2a2a2" stroke-width="0.8" rx="0" opacity="1"/>
<rect x="137.10000000000002" y="166.4" width="113.69999999999999" height="68.20000000000002" fill="none" stroke="#f8f8f8" stroke-width="0.6" rx="0" opacity="1"/>
<path d="M251.7,166.0 L251.7,235.5 L136.70000000000002,235.5" fill="none" stroke="#7c7c7c" stroke-width="1.0" />
<rect x="140.2" y="180.7" width="108.20000000000002" height="51.30000000000001" fill="#ffffff" stroke="#a9a9a9" stroke-width="0.7" rx="0" opacity="1"/>
<rect x="140.7" y="181.4" width="10.6" height="11.92" fill="#ececec" rx="0" opacity="1"/>
<line x1="140.6" y1="193.51999999999998" x2="246.9" y2="193.51999999999998" stroke="#e9e9ee" stroke-width="0.7" opacity="1"/>
<line x1="140.6" y1="193.51999999999998" x2="151.29999999999998" y2="193.51999999999998" stroke="#cfcfd4" stroke-width="0.7" opacity="1"/>
<text x="155.1" y="189.85" font-size="6.6" font-weight="normal" fill="#1a1a1a" stroke="#1a1a1a" stroke-width="0.22" textLength="33.4" lengthAdjust="spacingAndGlyphs">MaHocVien</text>
<path d="M145.34999999999997,185.1 Q147.39999999999998,183.9 149.45,185.1 L149.09999999999997,186.7 L148.34999999999997,187.7 L148.34999999999997,190.9 L146.45,190.9 L146.45,187.7 L145.7,186.7 Z" fill="#e4da22" stroke="#474100" stroke-width="0.55" stroke-linejoin="round"/>
<path d="M146.39999999999998,185.4 L148.39999999999998,185.4 L147.7,187.0 L147.7,190.2 L147.09999999999997,190.2 L147.09999999999997,187.0 Z" fill="#f3ee7a" />
<circle cx="147.39999999999998" cy="185.7" r="0.45" fill="#474100"/>
<rect x="140.7" y="193.82" width="10.6" height="11.92" fill="#ececec" rx="0" opacity="1"/>
<line x1="140.6" y1="205.93999999999997" x2="246.9" y2="205.93999999999997" stroke="#e9e9ee" stroke-width="0.7" opacity="1"/>
<line x1="140.6" y1="205.93999999999997" x2="151.29999999999998" y2="205.93999999999997" stroke="#cfcfd4" stroke-width="0.7" opacity="1"/>
<text x="155.1" y="202.27" font-size="6.6" font-weight="normal" fill="#1a1a1a" stroke="#1a1a1a" stroke-width="0.22" textLength="20.0" lengthAdjust="spacingAndGlyphs">MaLop</text>
<path d="M145.34999999999997,197.51999999999998 Q147.39999999999998,196.32 149.45,197.51999999999998 L149.09999999999997,199.11999999999998 L148.34999999999997,200.11999999999998 L148.34999999999997,203.32 L146.45,203.32 L146.45,200.11999999999998 L145.7,199.11999999999998 Z" fill="#e4da22" stroke="#474100" stroke-width="0.55" stroke-linejoin="round"/>
<path d="M146.39999999999998,197.82 L148.39999999999998,197.82 L147.7,199.42 L147.7,202.61999999999998 L147.09999999999997,202.61999999999998 L147.09999999999997,199.42 Z" fill="#f3ee7a" />
<circle cx="147.39999999999998" cy="198.11999999999998" r="0.45" fill="#474100"/>
<rect x="140.7" y="206.24" width="10.6" height="11.92" fill="#ececec" rx="0" opacity="1"/>
<line x1="140.6" y1="218.35999999999999" x2="246.9" y2="218.35999999999999" stroke="#e9e9ee" stroke-width="0.7" opacity="1"/>
<line x1="140.6" y1="218.35999999999999" x2="151.29999999999998" y2="218.35999999999999" stroke="#cfcfd4" stroke-width="0.7" opacity="1"/>
<text x="155.1" y="214.69" font-size="6.6" font-weight="normal" fill="#1a1a1a" stroke="#1a1a1a" stroke-width="0.22" textLength="40.0" lengthAdjust="spacingAndGlyphs">NgayGhiDanh</text>
<text x="141.9" y="178.8" font-size="8.6" font-weight="bold" fill="#000" stroke="#000" stroke-width="0.15" textLength="69.5" lengthAdjust="spacingAndGlyphs">HocVien_LopHoc</text>
<rect x="154.4" y="279.2" width="119.99999999999997" height="86.80000000000001" fill="#ededed" stroke="#a2a2a2" stroke-width="0.8" rx="0" opacity="1"/>
<rect x="155.20000000000002" y="280.0" width="118.39999999999998" height="85.20000000000002" fill="none" stroke="#f8f8f8" stroke-width="0.6" rx="0" opacity="1"/>
<path d="M274.5,279.59999999999997 L274.5,366.1 L154.8,366.1" fill="none" stroke="#7c7c7c" stroke-width="1.0" />
<rect x="158.6" y="294.1" width="112.29999999999998" height="68.79999999999995" fill="#ffffff" stroke="#a9a9a9" stroke-width="0.7" rx="0" opacity="1"/>
<rect x="159.1" y="294.8" width="10.6" height="11.92" fill="#ececec" rx="0" opacity="1"/>
<line x1="159.0" y1="306.92" x2="269.4" y2="306.92" stroke="#e9e9ee" stroke-width="0.7" opacity="1"/>
<line x1="159.0" y1="306.92" x2="169.7" y2="306.92" stroke="#cfcfd4" stroke-width="0.7" opacity="1"/>
<text x="173.5" y="303.25" font-size="6.6" font-weight="normal" fill="#1a1a1a" stroke="#1a1a1a" stroke-width="0.22" textLength="33.4" lengthAdjust="spacingAndGlyphs">MaHocVien</text>
<path d="M163.74999999999997,298.5 Q165.79999999999998,297.3 167.85,298.5 L167.49999999999997,300.1 L166.74999999999997,301.1 L166.74999999999997,304.3 L164.85,304.3 L164.85,301.1 L164.1,300.1 Z" fill="#e4da22" stroke="#474100" stroke-width="0.55" stroke-linejoin="round"/>
<path d="M164.79999999999998,298.8 L166.79999999999998,298.8 L166.1,300.4 L166.1,303.6 L165.49999999999997,303.6 L165.49999999999997,300.4 Z" fill="#f3ee7a" />
<circle cx="165.79999999999998" cy="299.1" r="0.45" fill="#474100"/>
<rect x="159.1" y="307.22" width="10.6" height="11.92" fill="#ececec" rx="0" opacity="1"/>
<line x1="159.0" y1="319.34000000000003" x2="269.4" y2="319.34000000000003" stroke="#e9e9ee" stroke-width="0.7" opacity="1"/>
<line x1="159.0" y1="319.34000000000003" x2="169.7" y2="319.34000000000003" stroke="#cfcfd4" stroke-width="0.7" opacity="1"/>
<text x="173.5" y="315.67" font-size="6.6" font-weight="normal" fill="#1a1a1a" stroke="#1a1a1a" stroke-width="0.22" textLength="19.4" lengthAdjust="spacingAndGlyphs">HoTen</text>
<rect x="159.1" y="319.64" width="10.6" height="11.92" fill="#ececec" rx="0" opacity="1"/>
<line x1="159.0" y1="331.76" x2="269.4" y2="331.76" stroke="#e9e9ee" stroke-width="0.7" opacity="1"/>
<line x1="159.0" y1="331.76" x2="169.7" y2="331.76" stroke="#cfcfd4" stroke-width="0.7" opacity="1"/>
<text x="173.5" y="328.09" font-size="6.6" font-weight="normal" fill="#1a1a1a" stroke="#1a1a1a" stroke-width="0.22" textLength="27.4" lengthAdjust="spacingAndGlyphs">NgaySinh</text>
<rect x="159.1" y="332.06" width="10.6" height="11.92" fill="#ececec" rx="0" opacity="1"/>
<line x1="159.0" y1="344.18" x2="269.4" y2="344.18" stroke="#e9e9ee" stroke-width="0.7" opacity="1"/>
<line x1="159.0" y1="344.18" x2="169.7" y2="344.18" stroke="#cfcfd4" stroke-width="0.7" opacity="1"/>
<text x="173.5" y="340.51" font-size="6.6" font-weight="normal" fill="#1a1a1a" stroke="#1a1a1a" stroke-width="0.22" textLength="24.4" lengthAdjust="spacingAndGlyphs">GioiTinh</text>
<rect x="159.1" y="344.48" width="10.6" height="11.92" fill="#ececec" rx="0" opacity="1"/>
<line x1="159.0" y1="356.6" x2="269.4" y2="356.6" stroke="#e9e9ee" stroke-width="0.7" opacity="1"/>
<line x1="159.0" y1="356.6" x2="169.7" y2="356.6" stroke="#cfcfd4" stroke-width="0.7" opacity="1"/>
<text x="173.5" y="352.93" font-size="6.6" font-weight="normal" fill="#1a1a1a" stroke="#1a1a1a" stroke-width="0.22" textLength="22.6" lengthAdjust="spacingAndGlyphs">NoiSinh</text>
<text x="160.0" y="292.4" font-size="8.6" font-weight="bold" fill="#000" stroke="#000" stroke-width="0.15" textLength="34.4" lengthAdjust="spacingAndGlyphs">HocVien</text>
<line x1="134" y1="120.3" x2="153" y2="120.3" stroke="#8c8c8c" stroke-width="2.1" opacity="1"/>
<line x1="134" y1="120.1" x2="153" y2="120.1" stroke="#e2e2e2" stroke-width="0.9" opacity="1"/>
<ellipse cx="128.0" cy="120.3" rx="2.0" ry="1.65" fill="#fff" stroke="#1c1c1c" stroke-width="0.85"/>
<ellipse cx="132.5" cy="120.3" rx="2.0" ry="1.65" fill="#fff" stroke="#1c1c1c" stroke-width="0.85"/>
<line x1="153.8" y1="120.3" x2="160.4" y2="120.3" stroke="#4a4000" stroke-width="2.0" opacity="1"/>
<line x1="153.8" y1="120.3" x2="160.20000000000002" y2="120.3" stroke="#e8d800" stroke-width="1.0" opacity="1"/>
<circle cx="154.4" cy="120.3" r="2.3" fill="#f4e400" stroke="#4a4000" stroke-width="0.6"/>
<circle cx="153.8" cy="120.3" r="0.6" fill="#5a5000"/>
<path d="M66,182.5 L101.2,182.5 L101.2,193.3 L129,193.3" fill="none" stroke="#a8a8a8" stroke-width="2.6" stroke-linejoin="miter"/>
<path d="M66,182 L101.2,182 L101.2,193 L129,193" fill="none" stroke="#484848" stroke-width="1.7" stroke-linejoin="miter"/>
<ellipse cx="129.6" cy="193" rx="2.0" ry="1.65" fill="#fff" stroke="#1c1c1c" stroke-width="0.85"/>
<ellipse cx="134.1" cy="193" rx="2.0" ry="1.65" fill="#fff" stroke="#1c1c1c" stroke-width="0.85"/>
<line x1="65.5" y1="174.2" x2="65.5" y2="179.2" stroke="#4a4000" stroke-width="2.0" opacity="1"/>
<line x1="65.5" y1="174.39999999999998" x2="65.5" y2="179.2" stroke="#e8d800" stroke-width="1.0" opacity="1"/>
<path d="M66.3,175.39999999999998 L67.5,175.39999999999998 M66.3,177.0 L67.3,177.0" fill="none" stroke="#4a4000" stroke-width="0.7" />
<circle cx="65.5" cy="180.39999999999998" r="2.3" fill="#f4e400" stroke="#4a4000" stroke-width="0.6"/>
<circle cx="65.5" cy="181.0" r="0.6" fill="#3a3000"/>
<path d="M260,171.6 L278,171.6 L281,174.6 L296.4,174.6" fill="none" stroke="#8a8a8a" stroke-width="2.4" />
<path d="M260,171.6 L278,171.6 L281,174.6 L296.4,174.6" fill="none" stroke="#d6d6d6" stroke-width="1.3" />
<ellipse cx="298.79999999999995" cy="174.6" rx="2.0" ry="1.65" fill="#fff" stroke="#1c1c1c" stroke-width="0.85"/>
<ellipse cx="303.29999999999995" cy="174.6" rx="2.0" ry="1.65" fill="#fff" stroke="#1c1c1c" stroke-width="0.85"/>
<line x1="252.2" y1="172" x2="258.59999999999997" y2="172" stroke="#4a4000" stroke-width="2.0" opacity="1"/>
<line x1="252.39999999999998" y1="172" x2="258.59999999999997" y2="172" stroke="#e8d800" stroke-width="1.0" opacity="1"/>
<path d="M253.39999999999998,172.8 L253.39999999999998,174 M255.0,172.8 L255.0,173.8" fill="none" stroke="#4a4000" stroke-width="0.7" />
<circle cx="258.4" cy="172" r="2.3" fill="#f4e400" stroke="#4a4000" stroke-width="0.6"/>
<circle cx="259.0" cy="172" r="0.6" fill="#5a5000"/>
<line x1="160.1" y1="245" x2="160.1" y2="271" stroke="#8c8c8c" stroke-width="2.2" opacity="1"/>
<line x1="159.8" y1="245" x2="159.8" y2="271" stroke="#cfcfcf" stroke-width="0.8" opacity="1"/>
<ellipse cx="160.1" cy="238.5" rx="1.65" ry="2.0" fill="#fff" stroke="#1c1c1c" stroke-width="0.85"/>
<ellipse cx="160.1" cy="243.1" rx="1.65" ry="2.0" fill="#fff" stroke="#1c1c1c" stroke-width="0.85"/>
<line x1="160.1" y1="273.8" x2="160.1" y2="279.0" stroke="#4a4000" stroke-width="2.0" opacity="1"/>
<line x1="160.1" y1="273.8" x2="160.1" y2="278.8" stroke="#e8d800" stroke-width="1.0" opacity="1"/>
<path d="M160.9,276.2 L162.1,276.2 M160.9,277.8 L161.9,277.8" fill="none" stroke="#4a4000" stroke-width="0.7" />
<circle cx="160.1" cy="272.7" r="2.3" fill="#f4e400" stroke="#4a4000" stroke-width="0.6"/>
<circle cx="160.1" cy="272.09999999999997" r="0.6" fill="#3a3000"/>
</svg>
</body></html>
